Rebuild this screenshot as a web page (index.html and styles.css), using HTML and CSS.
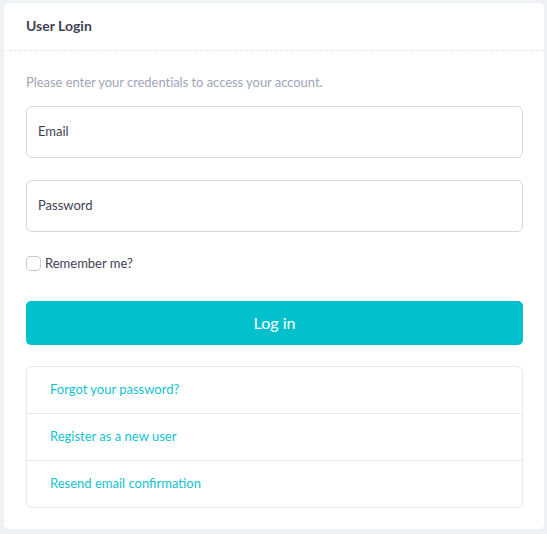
FILE: index.html
```html
<!DOCTYPE html>
<html>
<head>
<meta charset="utf-8">
<link rel="stylesheet" href="styles.css">
</head>
<body>
<div class="card">
  <div class="card-header">User Login</div>
  <div class="card-body">
    <p class="hint">Please enter your credentials to access your account.</p>
    <div class="field">Email</div>
    <div class="field">Password</div>
    <label class="check"><span class="box"></span>Remember me?</label>
    <button class="btn">Log in</button>
    <ul class="links">
      <li><a href="#">Forgot your password?</a></li>
      <li><a href="#">Register as a new user</a></li>
      <li><a href="#">Resend email confirmation</a></li>
    </ul>
  </div>
</div>
</body>
</html>
```

FILE: styles.css
```css
* { box-sizing: border-box; }
html, body { margin: 0; padding: 0; }
body {
  background: #eef1f5;
  font-family: "Lato", "Open Sans", sans-serif;
  color: #3f4254;
  padding: 3px 3px 5px 4px;
}
.card {
  background: #fff;
  border-radius: 5px;
  width: 540px;
  height: 526px;
}
.card-header {
  height: 48px;
  border-bottom: 1px dashed #e4e6ef;
  padding: 0 22px 2px;
  display: flex;
  align-items: center;
  font-size: 14px;
  font-weight: 700;
  color: #3f4254;
}
.card-body {
  padding: 0 21px 0 22px;
  display: flex;
  flex-direction: column;
}
.hint {
  margin: 23px 0 15px;
  font-size: 13px;
  line-height: 17px;
  color: #a1a5b7;
  letter-spacing: -0.05px;
}
.field {
  height: 52px;
  border: 1px solid #d5d8de;
  border-radius: 6px;
  padding: 0 11px 2px;
  display: flex;
  align-items: center;
  font-size: 13px;
  color: #3f4254;
  margin-bottom: 22px;
}
.check {
  display: flex;
  align-items: center;
  font-size: 13px;
  color: #3f4254;
  margin: 1px 0 30px;
  height: 16px;
}
.box {
  width: 15px;
  height: 15px;
  border: 1px solid #c9ccd4;
  border-radius: 4px;
  margin-right: 4px;
}
.btn {
  height: 44px;
  border: none;
  border-radius: 5px;
  background: #02c1cd;
  color: #fff;
  font-family: inherit;
  font-size: 16px;
  margin: 0 0 21px;
  padding: 0 0 2px;
}
.links {
  list-style: none;
  margin: 0;
  padding: 0;
  border: 1px solid #e6e8ee;
  border-radius: 6px;
}
.links li {
  height: 47px;
  display: flex;
  align-items: center;
  padding: 0 23px 2px;
  border-top: 1px solid #e6e8ee;
}
.links li:first-child { border-top: none; height: 46px; }
.links a {
  color: #13c3cf;
  text-decoration: none;
  font-size: 13px;
}
```
